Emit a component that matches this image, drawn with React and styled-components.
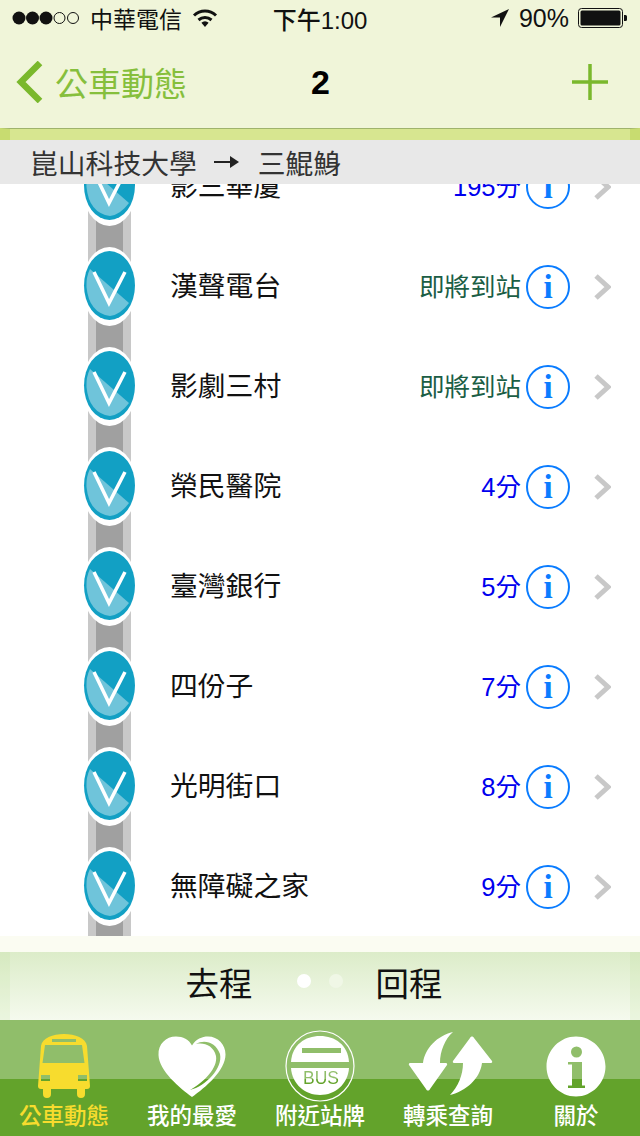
import styled, { createGlobalStyle } from "styled-components";

const cjk = `"Liberation Sans", "Noto Sans CJK TC", sans-serif`;

const GlobalStyle = createGlobalStyle`
  html, body { margin: 0; padding: 0; background: #fff; }
  body { font-family: ${cjk}; }
  * { box-sizing: border-box; }
`;

const Page = styled.div`
  width: 640px;
  height: 1136px;
  display: flex;
  flex-direction: column;
  overflow: hidden;
`;

const Header = styled.header`
  height: 128px;
  background: #f0f5d9;
`;

const StatusBar = styled.div`
  height: 40px;
  padding: 0 12px 4px;
  display: grid;
  grid-template-columns: 1fr auto 1fr;
  align-items: center;
  color: #111;
  font-size: 23px;
`;

const StatusLeft = styled.div`
  display: flex;
  align-items: center;
  gap: 10px;
`;

const StatusRight = styled.div`
  display: flex;
  align-items: center;
  justify-content: flex-end;
  gap: 9px;
  font-size: 25px;
`;

const Clock = styled.div`
  font-size: 24px;
  font-weight: 500;
`;

const NavBar = styled.div`
  height: 88px;
  padding: 0 16px 4px;
  display: grid;
  grid-template-columns: 1fr auto 1fr;
  align-items: center;
`;

const BackLink = styled.div`
  display: flex;
  align-items: center;
  gap: 12px;
  font-size: 33px;
  color: #86bf3c;
`;

const NavTitle = styled.div`
  padding-left: 1px;
  font-size: 34px;
  font-weight: 700;
  color: #000;
`;

const NavAction = styled.div`
  display: flex;
  justify-content: flex-end;
  padding-right: 16px;
`;

const Strip = styled.div`
  height: 12px;
  background: #d7e690;
  border-top: 1px solid #9fb36c;
  border-left: 10px solid #c8dc70;
  border-right: 10px solid #c8dc70;
`;

const RouteBar = styled.div`
  height: 44px;
  padding-left: 30px;
  display: flex;
  align-items: center;
  background: #e8e8e8;
  color: #333;
  font-size: 27.8px;
`;

const RouteArrow = styled.svg`
  margin: 0 19px 0 17px;
`;

const List = styled.div`
  flex: 1;
  min-height: 0;
  overflow: hidden;
  background: #fff;
`;

const ScrolledRows = styled.div`
  margin-top: -47px;
`;

const Row = styled.div`
  height: 100px;
  display: flex;
  align-items: center;
  padding-left: 82px;
`;

const Rail = styled.div`
  width: 55px;
  height: 100px;
  flex: none;
  display: flex;
  align-items: center;
  justify-content: center;
  background: linear-gradient(
      to right,
      transparent 6px,
      #c8c8c8 6px,
      #c8c8c8 14px,
      #a0a0a0 14px,
      #a0a0a0 41px,
      #c8c8c8 41px,
      #c8c8c8 49px,
      transparent 49px
    );
`;

const StopName = styled.div`
  margin-left: 33px;
  padding-bottom: 6px;
  flex: 1;
  font-size: 27.8px;
  color: #111;
`;

const Eta = styled.div`
  padding-bottom: 6px;
  font-size: 25.5px;
  color: ${(p) => (p.$soon ? "#1b5e45" : "#0000ee")};
`;

const InfoButton = styled.div`
  width: 44px;
  height: 44px;
  margin-left: 5px;
  border: 2.5px solid #0a7cff;
  border-radius: 50%;
  display: flex;
  align-items: center;
  justify-content: center;
  color: #0a7cff;
  font-family: "Liberation Serif", serif;
  font-size: 33px;
  font-weight: 700;
  line-height: 1;
`;

const Disclosure = styled.svg`
  margin: 0 29px 0 24px;
`;

const Pager = styled.div`
  height: 84px;
  padding-top: 16px;
  background: #fbfcf2;
`;

const PagerInner = styled.div`
  height: 68px;
  padding: 0 12px 10px 0;
  display: flex;
  align-items: center;
  justify-content: center;
  font-size: 33.500px;
  color: #111;
  background: linear-gradient(#dcecc9, #f5faee);
  border-left: 10px solid rgba(180, 220, 140, 0.15);
  border-right: 10px solid rgba(180, 220, 140, 0.15);
`;

const Dots = styled.div`
  display: flex;
  gap: 18px;
  margin: 0 33px 0 44px;
`;

const Dot = styled.span`
  width: 14px;
  height: 14px;
  border-radius: 50%;
  background: ${(p) => (p.$active ? "#fff" : "#f0f7e6")};
`;

const TabBar = styled.nav`
  height: 116px;
  display: grid;
  grid-template-columns: repeat(5, 128px);
  background: linear-gradient(#90be6a 59px, #63a32b 59px);
`;

const Tab = styled.div`
  display: flex;
  flex-direction: column;
  align-items: center;
  color: ${(p) => (p.$active ? "#f7dc2e" : "#fff")};
`;

const TabIcon = styled.div`
  height: 84px;
  padding-top: 8px;
  display: flex;
  align-items: center;
  justify-content: center;
`;

const TabLabel = styled.div`
  font-size: 22.5px;
  font-weight: 500;
  line-height: 26px;
`;

function SignalDots() {
  return (
    <svg width="68" height="14" viewBox="0 0 68 14">
      {[7, 20.5, 34].map((x) => (
        <circle key={x} cx={x} cy="7" r="6.500" fill="#111" />
      ))}
      {[47.5, 61].map((x) => (
        <circle key={x} cx={x} cy="7" r="5.500" fill="none" stroke="#111" strokeWidth="1" />
      ))}
    </svg>
  );
}

function Wifi() {
  return (
    <svg width="26" height="20" viewBox="0 0 26 20" fill="none" stroke="#111" strokeWidth="3">
      <path d="M2 7.500a16 16 0 0 1 22 0" />
      <path d="M6.500 12a10 10 0 0 1 13 0" />
      <path d="M13 19l-3.600-4.200a5 5 0 0 1 7.200 0z" fill="#111" stroke="none" />
    </svg>
  );
}

function Battery() {
  return (
    <svg width="50" height="22" viewBox="0 0 50 22">
      <rect x="0.500" y="1.500" width="44" height="19" rx="3" fill="none" stroke="#111" />
      <rect x="2.500" y="3.500" width="40" height="15" rx="1.500" fill="#111" />
      <path d="M46 8h1.500a1.500 1.500 0 0 1 1.500 1.500v3a1.500 1.500 0 0 1-1.500 1.500H46z" fill="#111" />
    </svg>
  );
}

function StopMarker() {
  return (
    <svg width="55" height="80" viewBox="0 0 55 80">
      <ellipse cx="27.500" cy="39.500" rx="27.500" ry="39.500" fill="#fff" />
      <ellipse cx="27.500" cy="38.500" rx="25.500" ry="34.500" fill="#12a0c4" />
      <path d="M8 22L47 56 Q38 68 28 69 Q7 66 4.500 40 Q4 30 8 22z" fill="#6fc4da" />
      <path d="M12 25L27 56 43 25" fill="none" stroke="#fff" strokeWidth="3.500" />
    </svg>
  );
}

function BusIcon() {
  return (
    <svg width="54" height="64" viewBox="0 0 54 64">
      <path
        fillRule="evenodd"
        fill="#f7dc2e"
        d="M1 52L4 12C5 4 16 0 27 0s22 4 23 12l3 40c0 2-1 3-3 3h-2v5a4 4 0 0 1-8 0v-5H14v5a4 4 0 0 1-8 0v-5H4c-2 0-3-1-3-3zM15 5v3h24v-3zM5.500 29h42L45 11H8zM4 41v6h9v-6zM41 41v6h9v-6z"
      />
    </svg>
  );
}

function HeartIcon() {
  return (
    <svg width="68" height="64" viewBox="0 -2 68 64">
      <defs>
        <mask id="heart-cut">
          <rect y="-2" width="68" height="64" fill="#fff" />
          <path d="M38 8C46 3 58 6 62 18 65 32 48 50 32 54 46 46 60 32 58 20 56 10 46 6 38 8z" fill="#000" />
        </mask>
      </defs>
      <path
        fill="#fff"
        mask="url(#heart-cut)"
        d="M34 61C22 52 1 35 0.500 19 0 8 8 0.500 18 0.500c7 0 13 3 16 9C38 3 44 0.500 50 0.500c10 0 17.500 8 17.500 18 0 16-20 33-33.500 42.500z"
      />
    </svg>
  );
}

function BusStopIcon() {
  return (
    <svg width="70" height="72" viewBox="0 0 70 72">
      <defs>
        <mask id="stop-cut">
          <rect width="70" height="72" fill="#fff" />
          <rect x="17" y="18" width="39" height="5" fill="#000" />
          <text x="36" y="54" textAnchor="middle" fontSize="17.500" fontFamily="Liberation Sans" fill="#000">
            BUS
          </text>
        </mask>
      </defs>
      <ellipse cx="35" cy="36" rx="34" ry="35" fill="none" stroke="#fff" strokeWidth="1.200" />
      <g mask="url(#stop-cut)" fill="#fff">
        <path d="M6 32C7 15 20 6 35 6s28 9 29 26z" />
        <path d="M6 38h58C63 54 50 65 35 65S7 54 6 38z" />
      </g>
    </svg>
  );
}

function TransferIcon() {
  return (
    <svg width="90" height="70" viewBox="-6 0 90 70" fill="#fff">
      <path d="M44 1C28 5 16 17 14 32H1c-1 0-1.500 1-1 2l17 24c1 2 3 2 4 0l17-24c.5-1 0-2-1-2H31C31 20 36 8 44 1z" />
      <path d="M41 64C57 60 71 48 73 32h9c1 0 1.500-1 1-2L65 7c-1-2-3-2-4 0L44 30c-.5 1 0 2 1 2h9C54 44 49 56 41 64z" />
    </svg>
  );
}

function AboutIcon() {
  return (
    <svg width="60" height="62" viewBox="0 0 60 62">
      <path
        fillRule="evenodd"
        fill="#fff"
        d="M30 1.500C46 1.500 59.500 15 59.500 31.500S46 61.500 30 61.500 0.500 48 0.500 31.500 14 1.500 30 1.500zM30.500 11.500a5.500 5.500 0 1 0 0 11 5.500 5.500 0 0 0 0-11zM22 27v2.500h4V50.500H22V53h17v-2.500h-3V27z"
      />
    </svg>
  );
}

const stops = [
  { name: "影三華廈", eta: "195分" },
  { name: "漢聲電台", eta: "即將到站", soon: true },
  { name: "影劇三村", eta: "即將到站", soon: true },
  { name: "榮民醫院", eta: "4分" },
  { name: "臺灣銀行", eta: "5分" },
  { name: "四份子", eta: "7分" },
  { name: "光明街口", eta: "8分" },
  { name: "無障礙之家", eta: "9分" },
];

const tabs = [
  { label: "公車動態", icon: <BusIcon />, active: true },
  { label: "我的最愛", icon: <HeartIcon /> },
  { label: "附近站牌", icon: <BusStopIcon /> },
  { label: "轉乘查詢", icon: <TransferIcon /> },
  { label: "關於", icon: <AboutIcon /> },
];

export default function App() {
  return (
    <Page>
      <GlobalStyle />
      <Header>
        <StatusBar>
          <StatusLeft>
            <SignalDots />
            <span>中華電信</span>
            <Wifi />
          </StatusLeft>
          <Clock>下午1:00</Clock>
          <StatusRight>
            <svg width="20" height="20" viewBox="0 0 20 20">
              <path d="M19 1L1 9.500h9V19z" fill="#111" />
            </svg>
            <span>90%</span>
            <Battery />
          </StatusRight>
        </StatusBar>
        <NavBar>
          <BackLink>
            <svg width="27" height="42" viewBox="0 0 27 42" fill="none" stroke="#7ab82c" strokeWidth="6.500">
              <path d="M24 2L5 21l19 19" />
            </svg>
            <span>公車動態</span>
          </BackLink>
          <NavTitle>2</NavTitle>
          <NavAction>
            <svg width="36" height="36" viewBox="0 0 36 36" stroke="#7ab82c" strokeWidth="3.500">
              <path d="M18 0v36M0 18h36" />
            </svg>
          </NavAction>
        </NavBar>
      </Header>
      <Strip />
      <RouteBar>
        <span>崑山科技大學</span>
        <RouteArrow width="25" height="14" viewBox="0 0 25 14">
          <path d="M0 7h18" stroke="#222" strokeWidth="2" />
          <path d="M16 1l9 6-9 6z" fill="#222" />
        </RouteArrow>
        <span>三鯤鯓</span>
      </RouteBar>
      <List>
        <ScrolledRows>
          {stops.map((stop) => (
            <Row key={stop.name}>
              <Rail>
                <StopMarker />
              </Rail>
              <StopName>{stop.name}</StopName>
              <Eta $soon={stop.soon}>{stop.eta}</Eta>
              <InfoButton>i</InfoButton>
              <Disclosure width="17" height="26" viewBox="0 0 17 26" fill="none" stroke="#c8c8c8" strokeWidth="5">
                <path d="M2 2l12 11L2 24" />
              </Disclosure>
            </Row>
          ))}
        </ScrolledRows>
      </List>
      <Pager>
        <PagerInner>
          <span>去程</span>
          <Dots>
            <Dot $active />
            <Dot />
          </Dots>
          <span>回程</span>
        </PagerInner>
      </Pager>
      <TabBar>
        {tabs.map((tab) => (
          <Tab key={tab.label} $active={tab.active}>
            <TabIcon>{tab.icon}</TabIcon>
            <TabLabel>{tab.label}</TabLabel>
          </Tab>
        ))}
      </TabBar>
    </Page>
  );
}
